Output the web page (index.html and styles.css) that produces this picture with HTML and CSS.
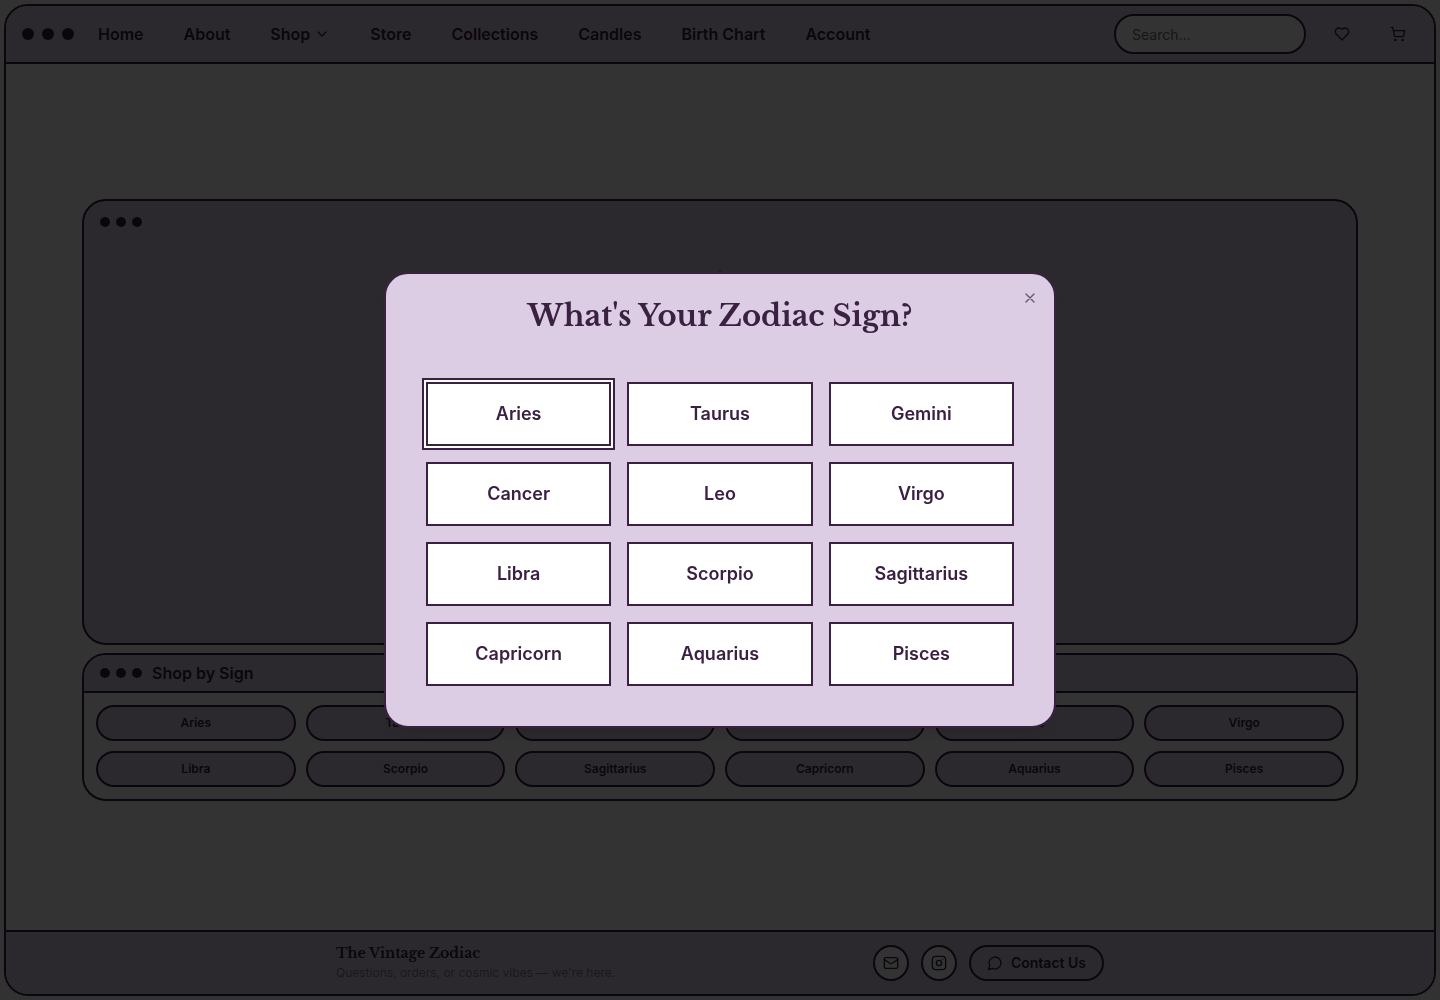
FILE: index.html
```html
<!DOCTYPE html>
<html lang="en">

<head>
    <meta charset="UTF-8">
    <meta name="viewport" content="width=device-width, initial-scale=1.0">
    <title>The Vintage Zodiac</title>
    <link rel="stylesheet" href="styles.css">
</head>

<body>
    <div class="window">
        <header class="navbar">
            <div class="dots dots-large"><span></span><span></span><span></span></div>
            <nav class="nav-links">
                <a href="#">Home</a>
                <a href="#">About</a>
                <a href="#">Shop
                    <svg class="icon" viewBox="0 0 24 24"><path d="m6 9 6 6 6-6"/></svg>
                </a>
                <a href="#">Store</a>
                <a href="#">Collections</a>
                <a href="#">Candles</a>
                <a href="#">Birth Chart</a>
                <a href="#">Account</a>
            </nav>
            <div class="nav-tools">
                <input class="search" type="search" placeholder="Search..." aria-label="Search">
                <button class="icon-btn" aria-label="Wishlist">
                    <svg class="icon" viewBox="0 0 24 24"><path d="M19 14c1.49-1.46 3-3.21 3-5.5A5.5 5.5 0 0 0 16.5 3c-1.76 0-3 .5-4.5 2-1.5-1.5-2.74-2-4.5-2A5.5 5.5 0 0 0 2 8.500c0 2.300 1.500 4.050 3 5.500l7 7Z"/></svg>
                </button>
                <button class="icon-btn" aria-label="Cart">
                    <svg class="icon" viewBox="0 0 24 24"><circle cx="8" cy="21" r="1"/><circle cx="19" cy="21" r="1"/><path d="M2.050 2.050h2l2.660 12.420a2 2 0 0 0 2 1.580h9.780a2 2 0 0 0 1.950-1.570l1.650-7.430H5.120"/></svg>
                </button>
            </div>
        </header>

        <main class="content">
            <section class="card hero">
                <div class="card-bar">
                    <div class="dots"><span></span><span></span><span></span></div>
                </div>
                <!-- Star emblem -->
                <svg class="emblem" viewBox="0 0 64 64"><path d="M32 1 38 26 63 32 38 38 32 63 26 38 1 32 26 26Z"/></svg>
            </section>

            <section class="card">
                <div class="card-bar card-title">
                    <div class="dots"><span></span><span></span><span></span></div>
                    <h2>Shop by Sign</h2>
                </div>
                <div class="sign-links">
                    <a href="#">Aries</a>
                    <a href="#">Taurus</a>
                    <a href="#">Gemini</a>
                    <a href="#">Cancer</a>
                    <a href="#">Leo</a>
                    <a href="#">Virgo</a>
                    <a href="#">Libra</a>
                    <a href="#">Scorpio</a>
                    <a href="#">Sagittarius</a>
                    <a href="#">Capricorn</a>
                    <a href="#">Aquarius</a>
                    <a href="#">Pisces</a>
                </div>
            </section>
        </main>

        <footer class="footer">
            <div class="footer-inner">
                <div>
                    <h3>The Vintage Zodiac</h3>
                    <p>Questions, orders, or cosmic vibes — we're here.</p>
                </div>
                <div class="contact">
                    <a class="round-link" href="#" aria-label="Email">
                        <svg class="icon" viewBox="0 0 24 24"><rect width="20" height="16" x="2" y="4" rx="2"/><path d="m22 7-8.970 5.700a1.940 1.940 0 0 1-2.060 0L2 7"/></svg>
                    </a>
                    <a class="round-link" href="#" aria-label="Instagram">
                        <svg class="icon" viewBox="0 0 24 24"><rect width="20" height="20" x="2" y="2" rx="5"/><circle cx="12" cy="12" r="4"/><path d="M17.500 6.500h.01"/></svg>
                    </a>
                    <button class="contact-btn">
                        <svg class="icon" viewBox="0 0 24 24"><path d="M7.900 20A9 9 0 1 0 4 16.100L2 22Z"/></svg>
                        Contact Us
                    </button>
                </div>
            </div>
        </footer>
    </div>

    <!-- Zodiac picker -->
    <div class="overlay">
        <div class="modal" role="dialog" aria-modal="true" aria-labelledby="modal-title">
            <button class="close-btn" aria-label="Close">
                <svg class="icon" viewBox="0 0 24 24"><path d="M18 6 6 18M6 6l12 12"/></svg>
            </button>
            <h1 id="modal-title">What's Your Zodiac Sign?</h1>
            <div class="sign-grid">
                <button class="selected">Aries</button>
                <button>Taurus</button>
                <button>Gemini</button>
                <button>Cancer</button>
                <button>Leo</button>
                <button>Virgo</button>
                <button>Libra</button>
                <button>Scorpio</button>
                <button>Sagittarius</button>
                <button>Capricorn</button>
                <button>Aquarius</button>
                <button>Pisces</button>
            </div>
        </div>
    </div>
</body>

</html>
```
FILE: styles.css
```css
* {
    margin: 0;
    padding: 0;
    box-sizing: border-box;
}

:root {
    --plum: #3a2142;
    --lavender: #dccde4;
}

body {
    min-height: 100vh;
    display: flex;
    padding: 4px;
    background-color: #fdfbf7;
    color: var(--plum);
    font-family: Inter, sans-serif;
}

a {
    color: inherit;
    text-decoration: none;
}

button {
    color: inherit;
    font-family: inherit;
    cursor: pointer;
}

.icon {
    width: 16px;
    height: 16px;
    fill: none;
    stroke: currentColor;
    stroke-width: 2;
    stroke-linecap: round;
    stroke-linejoin: round;
}

.window {
    flex: 1;
    display: flex;
    flex-direction: column;
    border: 2px solid var(--plum);
    border-radius: 24px;
    background-color: #fff;
    overflow: hidden;
}

.dots {
    display: flex;
    gap: 6px;
}

.dots span {
    width: 10px;
    height: 10px;
    border-radius: 50%;
    background-color: var(--plum);
}

.dots-large {
    gap: 8px;
}

.dots-large span {
    width: 12px;
    height: 12px;
}

/* Navbar */
.navbar {
    display: flex;
    align-items: center;
    gap: 24px;
    padding: 8px 16px;
    border-bottom: 2px solid var(--plum);
    background-color: var(--lavender);
}

.nav-links {
    display: flex;
    gap: 40px;
    font-size: 16px;
    font-weight: 600;
}

.nav-links a {
    display: flex;
    align-items: center;
    gap: 4px;
}

.nav-tools {
    display: flex;
    align-items: center;
    gap: 16px;
    margin-left: auto;
}

.search {
    width: 192px;
    height: 40px;
    padding: 0 16px;
    border: 2px solid var(--plum);
    border-radius: 20px;
    background-color: #fff;
    font-family: inherit;
    font-size: 14px;
}

.search::placeholder {
    color: #6b7280;
}

.icon-btn {
    display: flex;
    align-items: center;
    justify-content: center;
    width: 40px;
    height: 40px;
    border: none;
    background: none;
}

/* Main cards */
.content {
    flex: 1;
    display: flex;
    flex-direction: column;
    justify-content: center;
    gap: 8px;
    padding: 6px 76px 0;
}

.card {
    border: 2px solid var(--plum);
    border-radius: 24px;
    background-color: #fff;
    overflow: hidden;
}

.hero {
    display: flex;
    flex-direction: column;
    align-items: center;
    gap: 42px;
    min-height: 446px;
    background-color: var(--lavender);
}

.card-bar {
    display: flex;
    align-items: center;
    align-self: stretch;
    gap: 10px;
    padding: 16px 16px 0;
}

.emblem {
    width: 64px;
    height: 64px;
    fill: var(--plum);
}

.card-title {
    padding: 6px 16px;
    border-bottom: 2px solid var(--plum);
    background-color: var(--lavender);
}

.card-title h2 {
    font-size: 16px;
    font-weight: 600;
    line-height: 24px;
}

.sign-links {
    display: grid;
    grid-template-columns: repeat(6, 1fr);
    gap: 10px;
    padding: 12px;
}

.sign-links a {
    padding: 8px;
    border: 2px solid var(--plum);
    border-radius: 18px;
    background-color: var(--lavender);
    font-size: 12px;
    font-weight: 600;
    line-height: 16px;
    text-align: center;
}

/* Footer */
.footer {
    padding: 11px 16px;
    border-top: 2px solid var(--plum);
    background-color: var(--lavender);
}

.footer-inner {
    display: flex;
    align-items: center;
    justify-content: space-between;
    max-width: 768px;
    margin: 0 auto;
}

.footer h3 {
    font-family: "Libre Baskerville", "Liberation Serif", serif;
    font-size: 14px;
    line-height: 20px;
}

.footer p {
    color: #857a8b;
    font-size: 12px;
    line-height: 20px;
}

.contact {
    display: flex;
    gap: 12px;
}

.round-link,
.contact-btn {
    display: flex;
    align-items: center;
    justify-content: center;
    gap: 8px;
    height: 36px;
    border: 2px solid var(--plum);
    border-radius: 18px;
}

.round-link {
    width: 36px;
    background-color: #fff;
}

.contact-btn {
    padding: 0 16px;
    background-color: var(--lavender);
    font-size: 14px;
    font-weight: 600;
    line-height: 20px;
}

/* Modal */
.overlay {
    position: fixed;
    inset: 0;
    display: flex;
    align-items: center;
    justify-content: center;
    background-color: rgba(0, 0, 0, 0.8);
}

.modal {
    position: relative;
    width: 100%;
    max-width: 672px;
    padding: 24px 40px 40px;
    border: 2px solid var(--plum);
    border-radius: 24px;
    background-color: var(--lavender);
    box-shadow: 0 10px 15px -3px rgba(0, 0, 0, 0.1), 0 4px 6px -4px rgba(0, 0, 0, 0.1);
}

.modal h1 {
    margin-bottom: 48px;
    font-family: "Libre Baskerville", "Liberation Serif", serif;
    font-size: 29px;
    line-height: 36px;
    text-align: center;
}

.close-btn {
    position: absolute;
    top: 16px;
    right: 16px;
    display: flex;
    border: none;
    background: none;
    opacity: 0.7;
}

.sign-grid {
    display: grid;
    grid-template-columns: repeat(3, 1fr);
    gap: 16px;
}

.sign-grid button {
    height: 64px;
    border: 2px solid var(--plum);
    background-color: #fff;
    font-size: 18px;
    font-weight: 600;
    line-height: 28px;
}

.sign-grid .selected {
    box-shadow: 0 0 0 2px #fff, 0 0 0 4px var(--plum);
}

@media (max-width: 700px) {
    .nav-links {
        display: none;
    }

    .content {
        padding: 16px;
    }

    .sign-links {
        grid-template-columns: repeat(2, 1fr);
    }
}
```
